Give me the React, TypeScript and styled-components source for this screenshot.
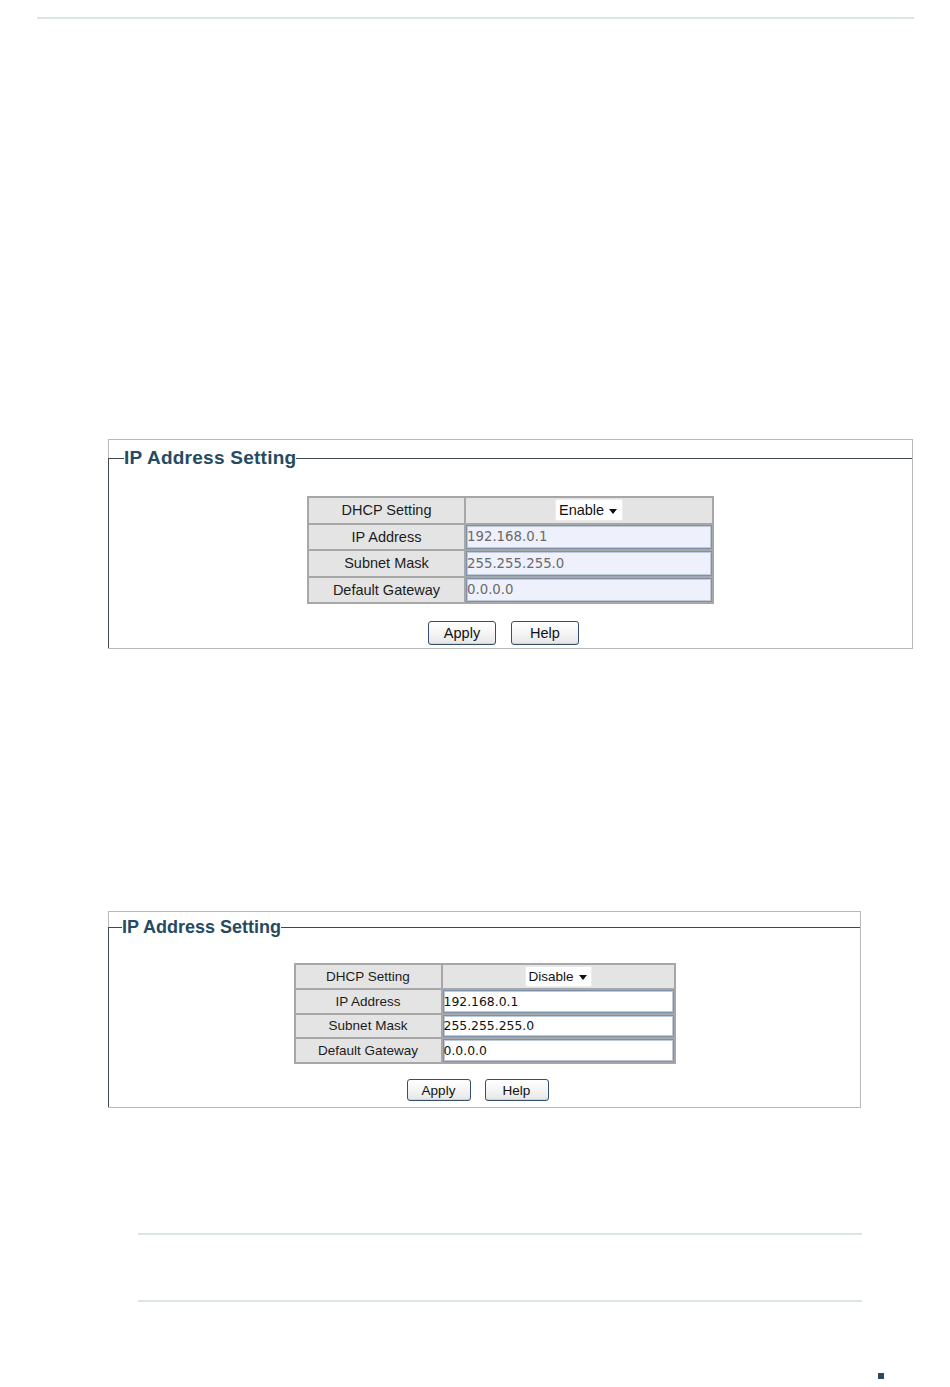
import React from 'react';
import styled, { createGlobalStyle } from 'styled-components';

type Size = {
	width: number;
	padTop: number;
	legendFont: number;
	legendLine: number;
	legendIndent: number;
	legendSpacing: number;
	bodyPad: number;
	labelW: number;
	valueW: number;
	rowH: number;
	labelFont: number;
	inputFont: number;
	selectW: number;
	selectH: number;
	btnW: number;
	btnH: number;
	btnGap: number;
	btnTop: number;
	padBottom: number;
};

const LARGE: Size = {
	width: 805,
	padTop: 7,
	legendFont: 19,
	legendLine: 22,
	legendIndent: 15,
	legendSpacing: 0.25,
	bodyPad: 27,
	labelW: 155,
	valueW: 246,
	rowH: 24.5,
	labelFont: 14.5,
	inputFont: 13.3,
	selectW: 68,
	selectH: 22,
	btnW: 68,
	btnH: 24,
	btnGap: 15,
	btnTop: 17,
	padBottom: 3,
};

const SMALL: Size = {
	width: 753,
	padTop: 5,
	legendFont: 18,
	legendLine: 20,
	legendIndent: 13,
	legendSpacing: 0,
	bodyPad: 26,
	labelW: 145,
	valueW: 231,
	rowH: 22.75,
	labelFont: 13.5,
	inputFont: 12.4,
	selectW: 67,
	selectH: 21,
	btnW: 64,
	btnH: 22,
	btnGap: 14,
	btnTop: 15,
	padBottom: 6,
};

const GlobalStyle = createGlobalStyle`
	html, body {
		margin: 0;
		padding: 0;
		background: #ffffff;
		font-family: 'Liberation Sans', Arial, sans-serif;
	}
`;

const Page = styled.div`
	width: 950px;
	min-height: 1387px;
	display: flex;
	flex-direction: column;
	align-items: flex-start;
`;

const Rule = styled.div<{ $top: number; $left: number; $width: number }>`
	margin-top: ${(p) => p.$top}px;
	margin-left: ${(p) => p.$left}px;
	width: ${(p) => p.$width}px;
	height: 2px;
	background: #dce6e9;
`;

const Panel = styled.div<{ $z: Size; $top: number }>`
	box-sizing: border-box;
	margin-top: ${(p) => p.$top}px;
	margin-left: 108px;
	width: ${(p) => p.$z.width}px;
	border: 1px solid #b9b9b9;
	padding-top: ${(p) => p.$z.padTop}px;
`;

const Fieldset = styled.fieldset<{ $z: Size }>`
	margin: 0 0 0 -1px;
	padding: 0 0 ${(p) => p.$z.padBottom}px 0;
	min-width: 0;
	border: none;
	border-top: 1px solid #3d4952;
	border-left: 1px solid #3d4952;
`;

const Legend = styled.legend<{ $z: Size }>`
	padding: 0;
	margin-left: ${(p) => p.$z.legendIndent}px;
	font-size: ${(p) => p.$z.legendFont}px;
	line-height: ${(p) => p.$z.legendLine}px;
	letter-spacing: ${(p) => p.$z.legendSpacing}px;
	font-weight: bold;
	color: #254b63;
`;

const Body = styled.div<{ $z: Size }>`
	padding-top: ${(p) => p.$z.bodyPad}px;
	display: flex;
	flex-direction: column;
	align-items: center;
`;

const Grid = styled.div<{ $z: Size }>`
	display: grid;
	grid-template-columns: ${(p) => p.$z.labelW}px ${(p) => p.$z.valueW}px;
	grid-auto-rows: ${(p) => p.$z.rowH}px;
	gap: 2px;
	border: 2px solid #a7a7a7;
	background: #a7a7a7;
`;

const Label = styled.div<{ $z: Size }>`
	background: #e4e4e4;
	display: flex;
	align-items: center;
	justify-content: center;
	font-size: ${(p) => p.$z.labelFont}px;
	color: #1c1c1c;
`;

const SelectCell = styled.div`
	background: #e4e4e4;
	display: flex;
	align-items: center;
	justify-content: center;
`;

const Select = styled.div<{ $z: Size }>`
	box-sizing: border-box;
	width: ${(p) => p.$z.selectW}px;
	height: ${(p) => p.$z.selectH}px;
	background: #ffffff;
	border: 1px solid #ececec;
	border-radius: 2px;
	display: flex;
	align-items: center;
	gap: 5px;
	padding-left: 3px;
	font-size: ${(p) => p.$z.labelFont}px;
	color: #111111;
`;

const Caret = styled.span`
	width: 0;
	height: 0;
	border-left: 4px solid transparent;
	border-right: 4px solid transparent;
	border-top: 5px solid #111111;
	margin-top: 2px;
`;

const Field = styled.input<{ $z: Size; $off: boolean }>`
	box-sizing: border-box;
	width: 100%;
	height: 100%;
	margin: 0;
	padding: 0;
	border: 1px solid #7c92ad;
	box-shadow: inset 0 0 0 1px #bfcad8;
	outline: none;
	background: ${(p) => (p.$off ? '#eef0fb' : '#ffffff')};
	color: ${(p) => (p.$off ? '#6a6a6a' : '#111111')};
	font-family: 'DejaVu Sans', Verdana, sans-serif;
	font-size: ${(p) => p.$z.inputFont}px;
`;

const Buttons = styled.div<{ $z: Size }>`
	display: flex;
	gap: ${(p) => p.$z.btnGap}px;
	margin-top: ${(p) => p.$z.btnTop}px;
	padding-right: 14px;
`;

const Button = styled.button<{ $z: Size }>`
	box-sizing: border-box;
	width: ${(p) => p.$z.btnW}px;
	height: ${(p) => p.$z.btnH}px;
	padding: 0;
	border: 1px solid #35506f;
	border-radius: 3px;
	background: linear-gradient(#ffffff 0%, #f6f6f6 45%, #e6e6e6 100%);
	box-shadow: inset 0 -1px 0 #d8d2b8;
	font-family: 'Liberation Sans', Arial, sans-serif;
	font-size: ${(p) => p.$z.labelFont}px;
	color: #111111;
`;

const Marker = styled.div`
	margin-top: 71px;
	margin-left: 878px;
	width: 6px;
	height: 6px;
	background: #2b4a5f;
`;

type Props = { z: Size; top: number; mode: string; off: boolean };

const IpSetting = ({ z, top, mode, off }: Props) => {
	const rows = [
		['IP Address', '192.168.0.1'],
		['Subnet Mask', '255.255.255.0'],
		['Default Gateway', '0.0.0.0'],
	];
	return (
		<Panel $z={z} $top={top}>
			<Fieldset $z={z}>
				<Legend $z={z}>IP Address Setting</Legend>
				<Body $z={z}>
					<Grid $z={z}>
						<Label $z={z}>DHCP Setting</Label>
						<SelectCell>
							<Select $z={z}>
								{mode}
								<Caret />
							</Select>
						</SelectCell>
						{rows.map(([name, value]) => (
							<React.Fragment key={name}>
								<Label $z={z}>{name}</Label>
								<Field $z={z} $off={off} value={value} readOnly />
							</React.Fragment>
						))}
					</Grid>
					<Buttons $z={z}>
						<Button $z={z}>Apply</Button>
						<Button $z={z}>Help</Button>
					</Buttons>
				</Body>
			</Fieldset>
		</Panel>
	);
};

const App = () => {
	return (
		<Page>
			<GlobalStyle />
			<Rule $top={17} $left={37} $width={877} />
			<IpSetting z={LARGE} top={420} mode="Enable" off />
			<IpSetting z={SMALL} top={262} mode="Disable" off={false} />
			<Rule $top={125} $left={138} $width={724} />
			<Rule $top={65} $left={138} $width={724} />
			<Marker />
		</Page>
	);
};

export default App;
